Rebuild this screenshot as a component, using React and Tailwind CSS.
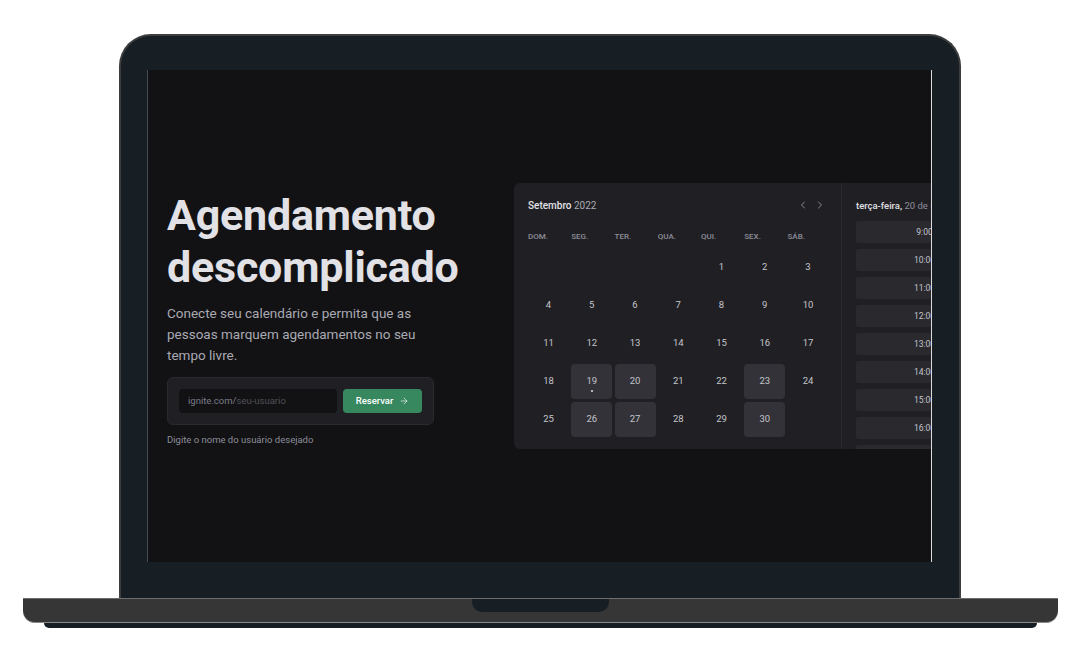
import React from 'react';
import { ChevronLeft, ChevronRight, ArrowRight } from 'lucide-react';

const weekDays = ['DOM.', 'SEG.', 'TER.', 'QUA.', 'QUI.', 'SEX.', 'SÁB.'];

// null = empty slot before the 1st
const days = [
  null, null, null, null, 1, 2, 3,
  4, 5, 6, 7, 8, 9, 10,
  11, 12, 13, 14, 15, 16, 17,
  18, 19, 20, 21, 22, 23, 24,
  25, 26, 27, 28, 29, 30, null,
];
const available = [19, 20, 23, 26, 27, 30];
const times = ['9:00', '10:00', '11:00', '12:00', '13:00', '14:00', '15:00', '16:00', '17:00'];

function Calendar() {
  return (
    <div className="w-[327px] shrink-0 pt-[15px] pl-[14px] pr-[13px]">
      <div className="flex items-center justify-between h-[14px]">
        <span className="text-[10px] text-[#e1e1e6] font-medium">
          Setembro <span className="text-[#a9a9b2] font-normal">2022</span>
        </span>
        <div className="flex items-center gap-[5px] text-[#a9a9b2] pr-[2px]">
          <ChevronLeft size={12} strokeWidth={1.5} />
          <ChevronRight size={12} strokeWidth={1.5} />
        </div>
      </div>
      <div className="grid grid-cols-[repeat(7,41px)] gap-x-[2.25px] mt-[20px]">
        {weekDays.map((d) => (
          <span key={d} className="text-[8px] leading-[10px] text-[#8d8d99] font-medium">{d}</span>
        ))}
      </div>
      <div className="grid grid-cols-[repeat(7,41px)] gap-x-[2.25px] gap-y-[3px] mt-[8px]">
        {days.map((d, i) => (
          <div
            key={i}
            className={`relative h-[35px] rounded-[4px] flex items-center justify-center text-[9.5px] text-[#c4c4cc] ${
              available.includes(d) ? 'bg-[#323238]' : ''
            }`}
          >
            {d}
            {d === 19 && <span className="absolute bottom-[7px] w-[2px] h-[2px] rounded-full bg-[#e1e1e6]" />}
          </div>
        ))}
      </div>
    </div>
  );
}

function TimePicker() {
  return (
    <div className="w-[167px] shrink-0 border-l border-[#29292e] pt-[16px] px-[14px]">
      <p className="text-[9.5px] leading-[14px] text-[#e1e1e6] font-medium whitespace-nowrap">
        terça-feira, <span className="text-[#8d8d99] font-normal">20 de setembro</span>
      </p>
      <div className="flex flex-col gap-[6px] mt-[8px]">
        {times.map((t) => (
          <div key={t} className="h-[22px] w-[137px] rounded-[3px] bg-[#29292e] flex items-center justify-center text-[8.5px] text-[#c4c4cc]">
            {t}
          </div>
        ))}
      </div>
    </div>
  );
}

export default function App() {
  return (
    <div className="w-[1080px] h-[670px] bg-white flex flex-col items-center pt-[34px] font-['Roboto',sans-serif]">
      {/* lid */}
      <div className="w-[842px] h-[564px] rounded-t-[32px] border-2 border-b-0 border-[#3d3d3d] bg-[#171e24] pt-[34px] pl-[26px] pr-[27px]">
        <div className="w-[785px] h-[492px] bg-[#121214] border-l border-l-[#454b53] border-r border-r-[#dcdcdc] overflow-hidden flex items-center pl-[19px]">
          <div className="w-[300px] shrink-0 mt-[4px]">
            <h1 className="text-[43px] leading-[52px] font-bold text-[#e1e1e6] tracking-[-0.2px]">
              Agendamento descomplicado
            </h1>
            <p className="mt-[10px] text-[13.5px] leading-[21px] text-[#a9a9b2] w-[255px]">
              Conecte seu calendário e permita que as pessoas marquem agendamentos no seu tempo livre.
            </p>
            <div className="mt-[11px] w-[267px] rounded-md border border-[#29292e] bg-[#202024] p-[11px] flex gap-[6px]">
              <div className="w-[158px] h-[24px] rounded-[4px] bg-[#121214] flex items-center pl-[9px] text-[9.5px]">
                <span className="text-[#7c7c8a]">ignite.com/</span>
                <span className="text-[#505059]">seu-usuario</span>
              </div>
              <button className="w-[79px] h-[24px] rounded-[4px] bg-[#37885f] flex items-center justify-center gap-[6px] text-[9.5px] font-medium text-white">
                Reservar <ArrowRight size={10} strokeWidth={1.5} />
              </button>
            </div>
            <p className="mt-[8px] text-[9.5px] text-[#8d8d99]">Digite o nome do usuário desejado</p>
          </div>
          <div className="ml-[47px] shrink-0 h-[266px] rounded-md bg-[#202024] flex overflow-hidden">
            <Calendar />
            <TimePicker />
          </div>
        </div>
      </div>
      {/* base */}
      <div className="w-[1035px] h-[25px] bg-[#363636] border-t border-t-[#6e6e6e] border-b border-b-[#8a8a8a] rounded-b-[12px] flex justify-center">
        <div className="w-[137px] h-[13px] bg-[#171e24] rounded-b-[10px]" />
      </div>
      <div className="w-[993px] h-[5px] bg-[#171e24] rounded-b-[6px]" />
    </div>
  );
}
